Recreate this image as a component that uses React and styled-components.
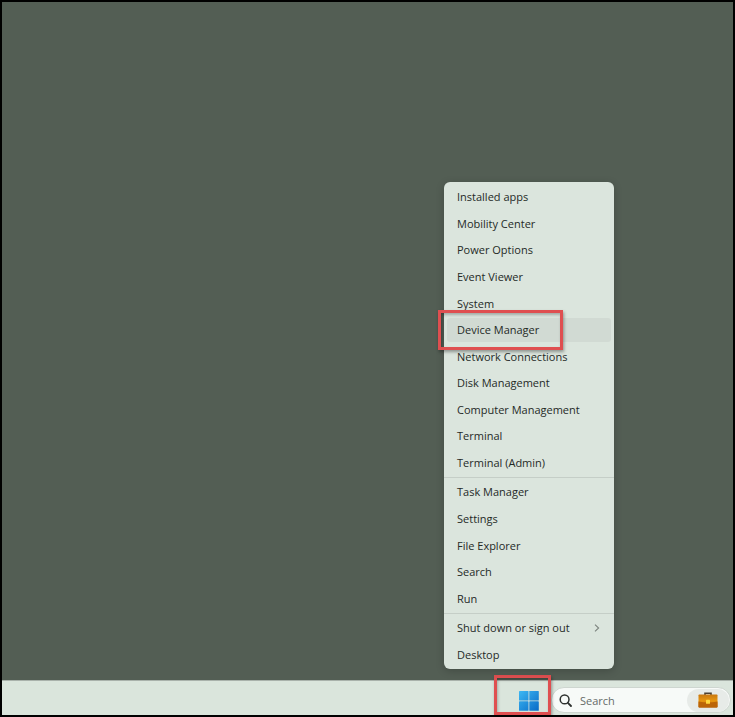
import React from "react";
import styled, { createGlobalStyle } from "styled-components";

const GlobalStyle = createGlobalStyle`
  * {
    box-sizing: border-box;
  }

  body {
    margin: 0;
    font-family: "Open Sans", "Noto Sans", sans-serif;
    font-size: 11px;
    color: #252a27;
  }

  button,
  input {
    font: inherit;
    color: inherit;
  }
`;

const Screen = styled.div`
  min-height: 100vh;
  display: flex;
  flex-direction: column;
  position: relative;
  overflow: hidden;
  background-color: #535e54;
  border: 2px solid #000;
`;

const Desktop = styled.main`
  flex: 1;
`;

const Menu = styled.ul`
  position: absolute;
  right: 119px;
  bottom: 46px;
  width: 170px;
  height: 487px;
  margin: 0;
  padding: 2px 0 1px;
  list-style: none;
  display: flex;
  flex-direction: column;
  background-color: #dbe5dd;
  border-radius: 6px;
  box-shadow: 0 2px 8px rgba(0, 0, 0, 0.2);
`;

const MenuItem = styled.li`
  flex: 1;
  display: flex;
  padding: 1px 3px;
  position: relative;
`;

const MenuButton = styled.button`
  flex: 1;
  display: flex;
  align-items: center;
  justify-content: space-between;
  padding: 0 11px 0 10px;
  border: none;
  border-radius: 3px;
  background-color: ${({ $active }) => ($active ? "#d1dad3" : "transparent")};
  line-height: 16px;
  white-space: nowrap;
`;

const Separator = styled.li`
  height: 1px;
  margin: 1px 0;
  background-color: #c5cec7;
`;

const Highlight = styled.div`
  position: absolute;
  border: 3px solid #df4f50;
  box-shadow: 1px 2px 3px rgba(0, 0, 0, 0.35), inset 1px 2px 3px rgba(0, 0, 0, 0.25);
  pointer-events: none;
`;

const ItemHighlight = styled(Highlight)`
  top: -7px;
  left: -6px;
  width: 125px;
  height: 40px;
`;

const StartHighlight = styled(Highlight)`
  top: -6px;
  left: -25px;
  width: 57px;
  height: 40px;
`;

const Taskbar = styled.footer`
  height: 35px;
  padding: 0 2px 0 0;
  display: flex;
  align-items: center;
  justify-content: flex-end;
  gap: 12px;
  background-color: #dae5dc;
  border-top: 1px solid #a9b2ab;
`;

const StartArea = styled.div`
  height: 34px;
  display: flex;
  align-items: center;
  position: relative;
`;

const StartButton = styled.button`
  display: flex;
  padding: 6px 0 0;
  border: none;
  background: none;
`;

const SearchBox = styled.label`
  width: 180px;
  height: 26px;
  margin-top: 4px;
  padding: 0 1px 0 7px;
  display: flex;
  align-items: center;
  gap: 8px;
  background-color: #f7faf8;
  border: 1px solid #ced6d0;
  border-radius: 13px;
`;

const SearchInput = styled.input`
  flex: 1;
  min-width: 0;
  padding: 0;
  border: none;
  outline: none;
  background: none;

  &::placeholder {
    color: #666b68;
    opacity: 1;
  }
`;

const SearchBadge = styled.span`
  width: 42px;
  height: 23px;
  display: flex;
  align-items: center;
  justify-content: center;
  background-color: #e7ebe8;
  border-radius: 12px;
`;

const WindowsLogo = () => (
  <svg width="20" height="20" viewBox="0 0 20 20" aria-hidden="true">
    <defs>
      <linearGradient id="win" x1="0" y1="0" x2="20" y2="20" gradientUnits="userSpaceOnUse">
        <stop offset="0" stopColor="#3db8f3" />
        <stop offset="1" stopColor="#0869c6" />
      </linearGradient>
    </defs>
    <g fill="url(#win)">
      <rect x="0" y="0" width="9.5" height="9.5" rx="0.6" />
      <rect x="10.3" y="0" width="9.5" height="9.5" rx="0.6" />
      <rect x="0" y="10.3" width="9.5" height="9.5" rx="0.6" />
      <rect x="10.3" y="10.3" width="9.5" height="9.5" rx="0.6" />
    </g>
  </svg>
);

const SearchIcon = () => (
  <svg width="13" height="13" viewBox="0 0 13 13" fill="none" stroke="#2d312f" strokeLinecap="round" aria-hidden="true">
    <circle cx="5.6" cy="5.4" r="4.4" strokeWidth="1.5" />
    <path d="M8.9 8.8 12 12" strokeWidth="1.8" />
  </svg>
);

const Briefcase = () => (
  <svg width="20" height="16" viewBox="0 0 20 16" aria-hidden="true">
    <defs>
      <linearGradient id="case" x1="0" y1="0" x2="0" y2="1">
        <stop offset="0" stopColor="#c9780f" />
        <stop offset="0.5" stopColor="#e8960f" />
        <stop offset="1" stopColor="#b45a08" />
      </linearGradient>
    </defs>
    <path d="M7 3V1.2h6V3" fill="none" stroke="#4c4031" strokeWidth="1.6" />
    <rect x="0.5" y="2.5" width="19" height="13" rx="0.8" fill="url(#case)" />
    <path d="M0.5 9.6Q10 11.5 19.5 9.6V14.7a0.8 0.8 0 0 1-0.8 0.8H1.3a0.8 0.8 0 0 1-0.8-0.8Z" fill="#bb6407" />
    <rect x="8" y="7.8" width="4" height="4" rx="0.6" fill="#ffd83d" />
  </svg>
);

const Chevron = () => (
  <svg width="6" height="8" viewBox="0 0 6 8" fill="none" stroke="#7c837e" strokeWidth="1.1" aria-hidden="true">
    <path d="M1 0.6 4.6 4 1 7.4" />
  </svg>
);

const groups = [
  [
    "Installed apps",
    "Mobility Center",
    "Power Options",
    "Event Viewer",
    "System",
    "Device Manager",
    "Network Connections",
    "Disk Management",
    "Computer Management",
    "Terminal",
    "Terminal (Admin)",
  ],
  ["Task Manager", "Settings", "File Explorer", "Search", "Run"],
  ["Shut down or sign out", "Desktop"],
];

const ACTIVE = "Device Manager";
const SUBMENU = "Shut down or sign out";

const App = () => {
  return (
    <>
      <GlobalStyle />
      <Screen>
        <Desktop />
        <Taskbar>
          <StartArea>
            <StartButton type="button" aria-label="Start">
              <WindowsLogo />
            </StartButton>
            <StartHighlight />
          </StartArea>
          <SearchBox>
            <SearchIcon />
            <SearchInput type="text" placeholder="Search" aria-label="Search" />
            <SearchBadge>
              <Briefcase />
            </SearchBadge>
          </SearchBox>
        </Taskbar>
        <Menu>
          {groups.map((items, index) => (
            <React.Fragment key={items[0]}>
              {index > 0 && <Separator role="separator" />}
              {items.map((item) => (
                <MenuItem key={item}>
                  <MenuButton type="button" $active={item === ACTIVE}>
                    {item}
                    {item === SUBMENU && <Chevron />}
                  </MenuButton>
                  {item === ACTIVE && <ItemHighlight />}
                </MenuItem>
              ))}
            </React.Fragment>
          ))}
        </Menu>
      </Screen>
    </>
  );
};

export default App;
